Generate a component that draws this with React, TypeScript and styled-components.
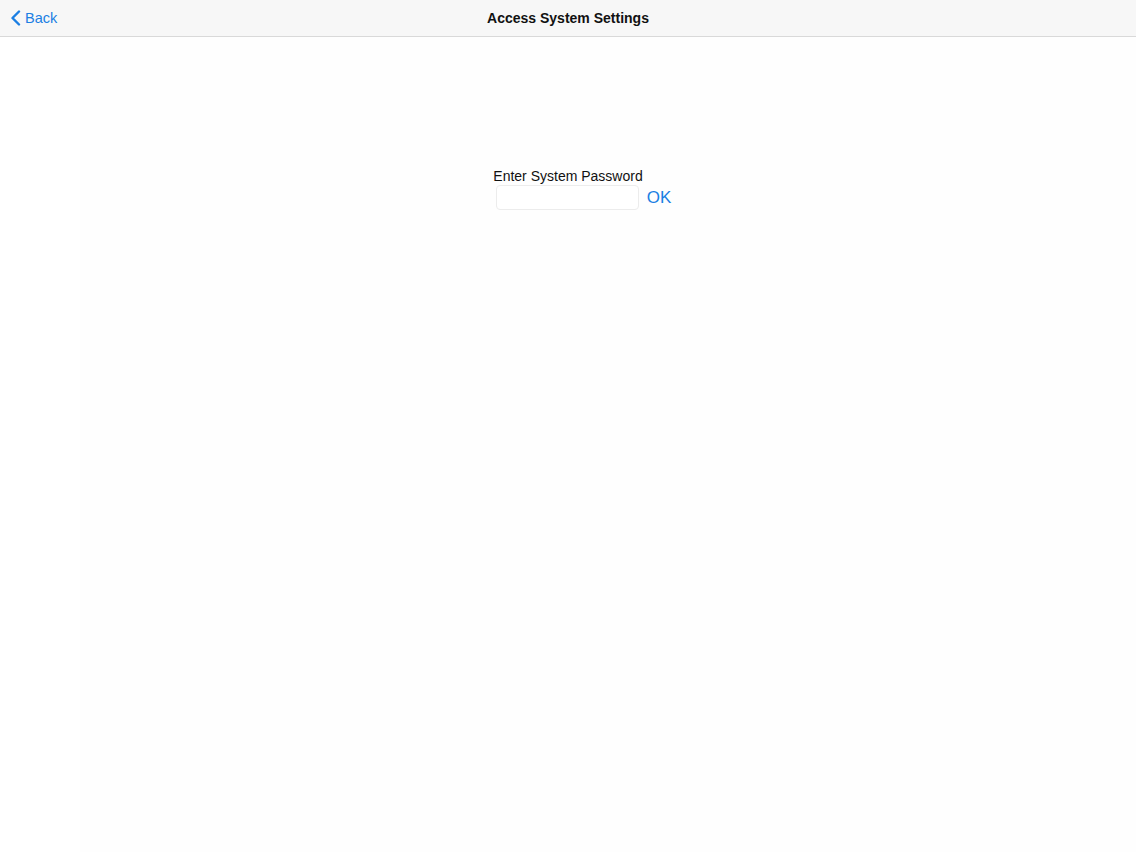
import React, { useState } from 'react';
import styled, { createGlobalStyle } from 'styled-components';

const GlobalStyle = createGlobalStyle`
  html, body {
    margin: 0;
    padding: 0;
    background: #fefefe;
    font-family: "Liberation Sans", Arial, sans-serif;
  }
`;

const Page = styled.div`
  display: flex;
  flex-direction: column;
  width: 1136px;
  height: 852px;
  overflow: hidden;
`;

const NavBar = styled.header`
  display: grid;
  grid-template-columns: 1fr auto 1fr;
  align-items: center;
  height: 36px;
  flex-shrink: 0;
  background: #f7f7f7;
  border-bottom: 1px solid #d9d9d9;
`;

const BackButton = styled.button`
  justify-self: start;
  display: flex;
  align-items: center;
  gap: 4px;
  padding: 0 0 0 10px;
  border: none;
  background: none;
  color: #1b7fe3;
  font-family: inherit;
  font-size: 14.5px;
  cursor: pointer;
`;

const Title = styled.h1`
  margin: 0;
  font-size: 14px;
  font-weight: 700;
  color: #111;
`;

const Body = styled.div`
  display: flex;
  flex: 1;
`;

const SideGutter = styled.div`
  width: 80px;
  background: #ffffff;
`;

const Main = styled.main`
  flex: 1;
  display: flex;
  flex-direction: column;
  align-items: center;
  padding-top: 131px;
  padding-right: 80px;
  background: #fefefe;
`;

const Label = styled.label`
  font-size: 14px;
  color: #111;
  line-height: 17px;
`;

const Row = styled.div`
  display: flex;
  align-items: center;
  gap: 8px;
  margin-left: 31px;
`;

const PasswordInput = styled.input`
  box-sizing: border-box;
  width: 143px;
  height: 25px;
  border: 1px solid #ececec;
  border-radius: 4px;
  background: #ffffff;
  outline: none;
  padding: 0 6px;
`;

const OkButton = styled.button`
  border: none;
  background: none;
  padding: 0;
  color: #1b7fe3;
  font-family: inherit;
  font-size: 17px;
  cursor: pointer;
`;

const Chevron = () => (
  <svg width="11" height="16" viewBox="0 0 11 16" fill="none">
    <path d="M9 1.5L2.5 8L9 14.5" stroke="#1b7fe3" strokeWidth="2.4" strokeLinecap="round" strokeLinejoin="round" />
  </svg>
);

export default function App() {
  const [password, setPassword] = useState('');

  return (
    <>
      <GlobalStyle />
      <Page>
        <NavBar>
          <BackButton>
            <Chevron />
            Back
          </BackButton>
          <Title>Access System Settings</Title>
          <span />
        </NavBar>
        <Body>
          <SideGutter />
          <Main>
            <Label htmlFor="sys-pass">Enter System Password</Label>
            <Row>
              <PasswordInput
                id="sys-pass"
                type="password"
                value={password}
                onChange={(e) => setPassword(e.target.value)}
              />
              <OkButton>OK</OkButton>
            </Row>
          </Main>
        </Body>
      </Page>
    </>
  );
}
